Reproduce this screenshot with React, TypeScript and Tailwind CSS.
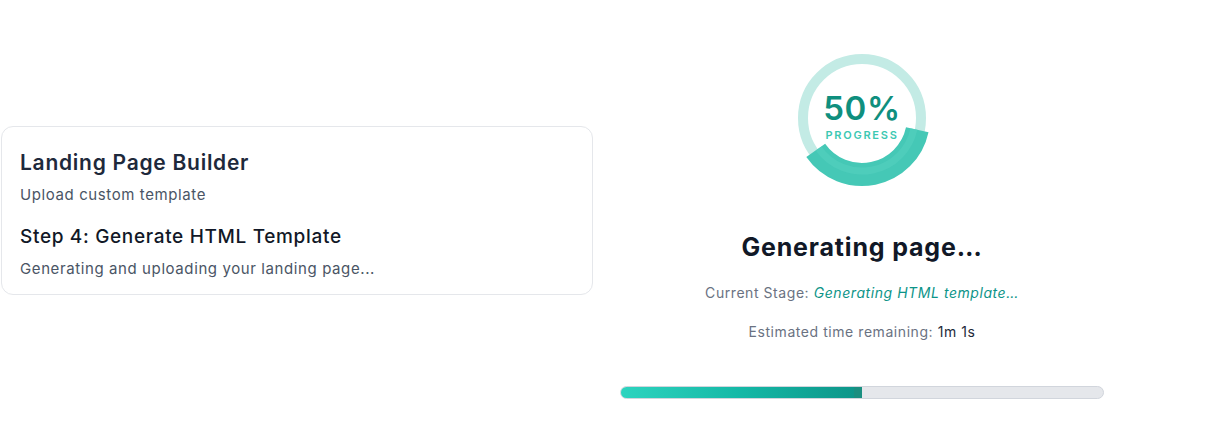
export default function App() {
  return (
    <div
      className="flex w-[1210px] h-[448px] bg-white overflow-hidden"
      style={{ fontFamily: "Inter, 'Noto Sans', sans-serif" }}
    >
      {/* Left: builder step card */}
      <div className="mt-[126px] ml-px w-[592px] h-[169px] self-start rounded-xl border border-gray-200 bg-white px-[18px] pt-[22px]">
        <h2 className="text-[21px] leading-7 font-semibold text-[#1e293b] tracking-[0.035em]">
          Landing Page Builder
        </h2>
        <p className="mt-[8px] text-[15px] leading-5 text-gray-600 tracking-[0.04em]">
          Upload custom template
        </p>
        <h3 className="mt-[20px] text-[19px] leading-6 font-medium text-[#111827] tracking-[0.035em]">
          Step 4: Generate HTML Template
        </h3>
        <p className="mt-[10px] text-[15px] leading-5 text-gray-600 tracking-[0.04em]">
          Generating and uploading your landing page...
        </p>
      </div>

      {/* Right: progress */}
      <div className="ml-[27px] w-[484px] flex flex-col items-center pt-[43px]">
        <ProgressRing />
        <h1 className="mt-[38px] text-[25px] leading-8 font-bold text-[#111827] tracking-[0.033em]">
          Generating page…
        </h1>
        <p className="mt-[20px] text-sm leading-5 text-gray-500 tracking-[0.04em]">
          Current Stage: <span className="italic text-[#0d9488]">Generating HTML template…</span>
        </p>
        <p className="mt-[19px] text-sm leading-5 text-gray-500 tracking-[0.04em]">
          Estimated time remaining: <span className="text-gray-800">1m 1s</span>
        </p>
        <div className="mt-[44px] w-full h-[13px] rounded-full border border-gray-300 bg-gray-200 overflow-hidden">
          <div className="h-full w-1/2 flex bg-gradient-to-r from-[#2dd4bf] via-[#14b8a6] to-[#0d9488]">
            <div className="ml-auto w-[8px] h-full bg-[#1a8f80]" />
          </div>
        </div>
      </div>
    </div>
  );
}

function ProgressRing() {
  return (
    <div className="relative w-[150px] h-[150px]">
      <svg width="150" height="150" viewBox="0 0 150 150" className="absolute inset-0">
        <circle cx="75" cy="75" r="59" fill="none" stroke="#c3ebe5" strokeWidth="10" />
        <path
          d="M130.26 86.75 A56.5 56.5 0 0 1 28.72 107.41"
          fill="none"
          stroke="#45c8b6"
          strokeWidth="23"
        />
        <path
          d="M126.9 86.0 A53 53 0 0 1 31.6 105.4"
          fill="none"
          stroke="#52cebe"
          strokeWidth="7"
          opacity="0.7"
        />
      </svg>
      <div className="absolute inset-0 flex flex-col items-center pt-[47px]">
        <span className="text-[33px] leading-9 font-semibold text-[#0f8f7e] tracking-[0.02em]">50%</span>
        <span className="mt-[1px] text-[11px] leading-4 font-semibold tracking-[0.16em] text-[#3cc8b2]">
          PROGRESS
        </span>
      </div>
    </div>
  );
}
